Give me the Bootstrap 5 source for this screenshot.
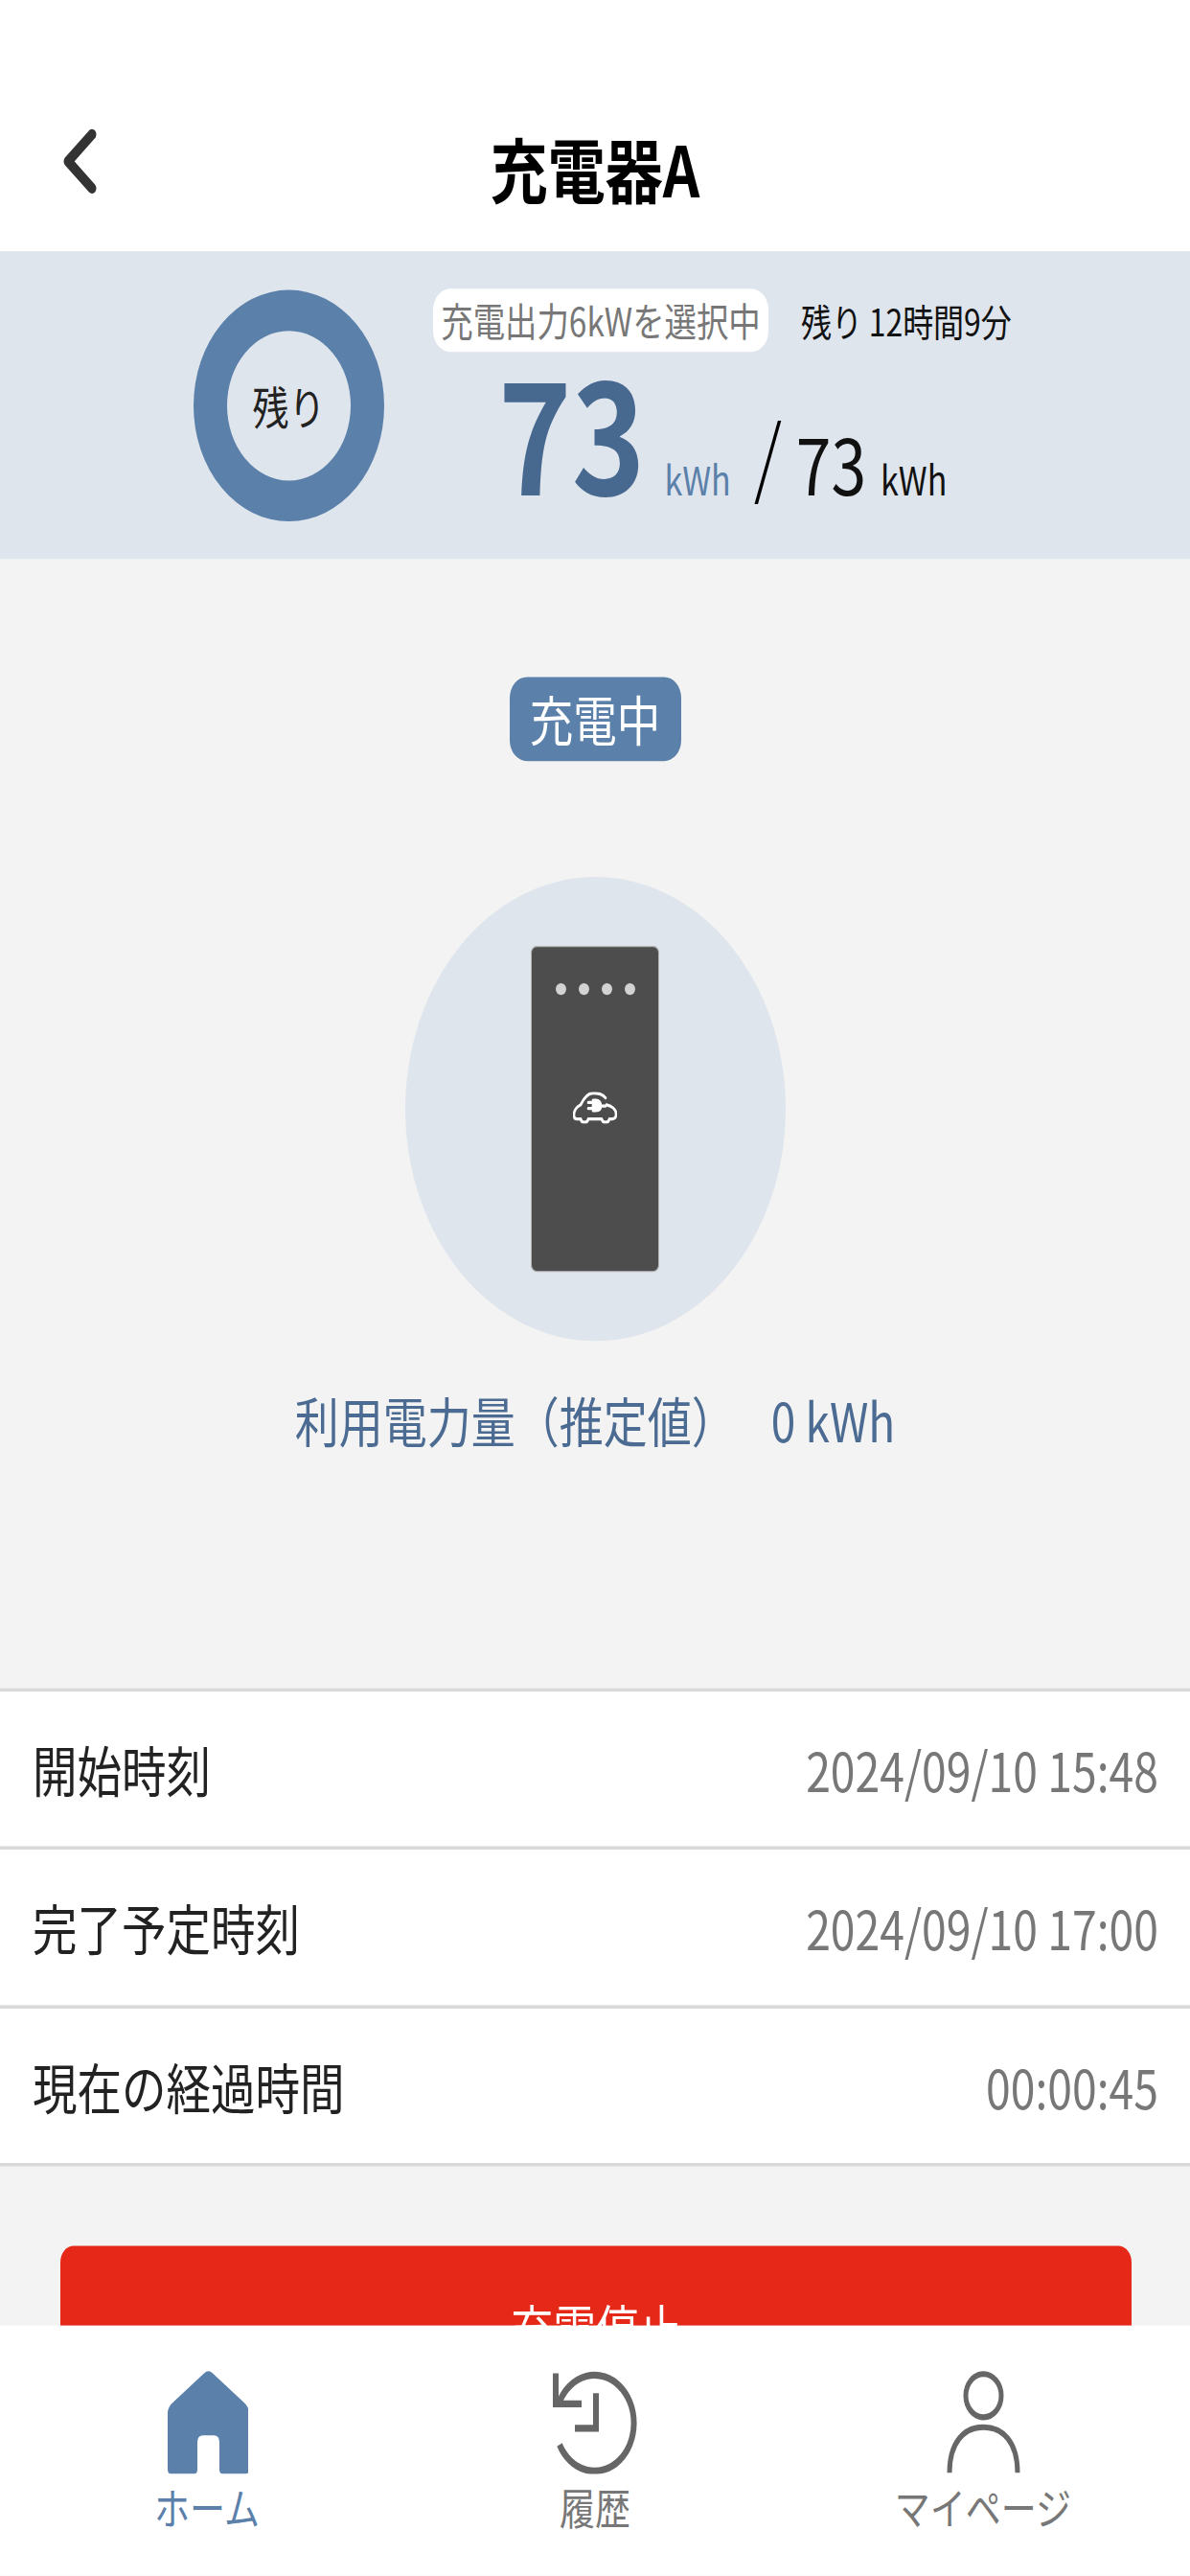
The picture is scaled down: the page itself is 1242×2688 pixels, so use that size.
<!DOCTYPE html>
<html lang="ja">
<head>
    <meta charset="UTF-8">
    <meta name="viewport" content="width=device-width, initial-scale=1.0">
    <title>充電器A</title>
    <link href="https://cdn.jsdelivr.net/npm/bootstrap@5.3.0/dist/css/bootstrap.min.css" rel="stylesheet">
    <style>
        html, body {
            margin: 0;
            height: 2688px;
            overflow: hidden;
            background: #fff;
        }
        /* the screenshot is stretched vertically, so the whole screen is scaled */
        .phone {
            width: 1242px;
            height: 2203.3px;
            transform: scaleY(1.22);
            transform-origin: top left;
            position: relative;
            overflow: hidden;
            background: #f3f3f3;
            font-family: "Noto Sans CJK JP", "Noto Sans", sans-serif;
            line-height: 1;
            color: #222;
        }
        .top-head {
            height: 215px;
            padding: 70px 0 0 65px;
            background: #fff;
            display: grid;
            grid-template-columns: 1fr auto 1fr;
            align-items: center;
        }
        .top-head h1 {
            font-size: 60px;
            font-weight: 700;
            color: #000;
            margin: 0 65px 0 0;
        }
        .back-icon {
            width: 36px;
            height: 56px;
            margin-bottom: 9px;
        }
        .info-band {
            height: 263px;
            background: #dfe5ed;
            padding-left: 202px;
            gap: 51px;
        }
        .ring {
            width: 199px;
            height: 198px;
            border: 35px solid #5b80aa;
            border-radius: 50%;
            font-size: 38px;
            flex: none;
        }
        .info-right {
            padding-top: 32px;
            align-self: flex-start;
        }
        .power-chip {
            width: 350px;
            height: 54px;
            background: #fff;
            border-radius: 18px;
            color: #777;
            font-size: 33.4px;
        }
        .left-time {
            font-size: 32px;
            color: #111;
            margin-left: 34px;
            letter-spacing: -.1px;
        }
        .value-row {
            margin-top: 12px;
            padding-left: 70px;
        }
        .big-num {
            font-size: 130px;
            font-weight: 700;
            color: #47688f;
            line-height: 108px;
            margin-left: -2px;
        }
        .unit {
            font-size: 34px;
        }
        .unit-blue {
            color: #5b80aa;
            margin-left: 20px;
        }
        .slash {
            font-size: 74px;
            font-weight: 300;
            color: #000;
            margin-left: 24px;
            transform: translateY(-6px);
        }
        .total-num {
            font-size: 66px;
            color: #111;
            margin-left: 15px;
        }
        .unit-dark {
            color: #111;
            margin-left: 15px;
        }
        .charge-area {
            height: 966px;
            padding-top: 101px;
        }
        .status-tag {
            width: 179px;
            height: 72px;
            background: #5b80aa;
            color: #fff;
            border-radius: 18px;
            font-size: 45.5px;
        }
        .charger-bg {
            width: 397px;
            height: 397px;
            margin-top: 99px;
            border-radius: 50%;
            background: #dfe5ed;
        }
        .charger {
            width: 134px;
            height: 279px;
            background: #4d4d4d;
            border: 1px solid #b5b5b5;
            border-radius: 6px;
            padding-top: 31px;
        }
        .led-row {
            gap: 13px;
        }
        .led {
            width: 11px;
            height: 10px;
            border-radius: 50%;
            background: #d2d2d2;
        }
        .car-icon {
            width: 46px;
            height: 27px;
            margin-top: 83px;
        }
        .usage-text {
            margin-top: 44px;
            font-size: 46px;
            color: #4b6b92;
        }
        .usage-value {
            margin-left: 37px;
        }
        .time-list {
            border-top: 3px solid #d9d9d9;
            border-radius: 0;
        }
        .time-list .list-group-item {
            height: 135.4px;
            padding: 0 33px 0 34px;
            border: 0;
            border-bottom: 3px solid #d9d9d9;
            font-size: 46.5px;
            color: #222;
            background: #fff;
        }
        .time-val {
            color: #777;
            font-size: 46.3px;
        }
        .stop-btn {
            display: block;
            width: 1118px;
            height: 138px;
            margin: 68px 0 0 63px;
            background: #e62818;
            border: 0;
            border-radius: 14px;
            color: #fff;
            font-size: 44.5px;
        }
        .bottom-tabs {
            position: absolute;
            left: 0;
            right: 0;
            bottom: 0;
            height: 214px;
            background: #fff;
            padding: 38px 13.5px 0;
        }
        .tab-icon {
            height: 89px;
            display: block;
            margin: 0 auto;
        }
        .tab-label {
            font-size: 37px;
            color: #777;
            margin-top: 10px;
        }
        .tab-label.active {
            color: #5b80aa;
        }
    </style>
</head>
<body>
    <div class="phone">
        <div class="top-head">
            <svg class="back-icon" viewBox="0 0 36 56" fill="none" stroke="#333" stroke-width="9" stroke-linecap="round" stroke-linejoin="round">
                <path d="M31 5 L6 28 L31 51"/>
            </svg>
            <h1>充電器A</h1>
            <span></span>
        </div>

        <div class="info-band d-flex align-items-center">
            <div class="ring d-flex align-items-center justify-content-center">残り</div>
            <div class="info-right">
                <div class="d-flex align-items-center">
                    <div class="power-chip d-flex align-items-center justify-content-center">充電出力6kWを選択中</div>
                    <div class="left-time">残り 12時間9分</div>
                </div>
                <div class="value-row d-flex align-items-baseline">
                    <span class="big-num">73</span>
                    <span class="unit unit-blue">kWh</span>
                    <span class="slash">/</span>
                    <span class="total-num">73</span>
                    <span class="unit unit-dark">kWh</span>
                </div>
            </div>
        </div>

        <div class="charge-area d-flex flex-column align-items-center">
            <div class="status-tag d-flex align-items-center justify-content-center">充電中</div>
            <div class="charger-bg d-flex align-items-center justify-content-center">
                <div class="charger d-flex flex-column align-items-center">
                    <div class="led-row d-flex">
                        <span class="led"></span><span class="led"></span><span class="led"></span><span class="led"></span>
                    </div>
                    <svg class="car-icon" viewBox="0 0 46 27" fill="none" stroke="#fff" stroke-width="2.600" stroke-linecap="round" stroke-linejoin="round">
                        <path d="M34 5 C30 1 25 1 21 1 C15 1 11 6 8 11 C3 13 1 16 1 20 C1 22 2 23 4 23 H8"/>
                        <path d="M8 23 C9 27 15 27 16 23 H30 C31 27 37 27 38 23 H41 C44 23 45 21 45 19 C45 15 41 12 35 11"/>
                        <path d="M21 7 H24 C27 7 29 9 29 12 C29 15 27 16 24 16 H21 Z" fill="#fff"/>
                        <path d="M16 9 H21 M16 14 H21 M29 12 H34"/>
                    </svg>
                </div>
            </div>
            <div class="usage-text">利用電力量&#xFF08;推定値&#xFF09;<span class="usage-value">0 kWh</span></div>
        </div>

        <div class="list-group time-list">
            <div class="list-group-item d-flex justify-content-between align-items-center">
                <span>開始時刻</span><span class="time-val">2024/09/10 15:48</span>
            </div>
            <div class="list-group-item d-flex justify-content-between align-items-center">
                <span>完了予定時刻</span><span class="time-val">2024/09/10 17:00</span>
            </div>
            <div class="list-group-item d-flex justify-content-between align-items-center">
                <span>現在の経過時間</span><span class="time-val">00:00:45</span>
            </div>
        </div>

        <button class="btn stop-btn" type="button">充電停止</button>

        <div class="bottom-tabs row g-0">
            <div class="col-4 text-center">
                <svg class="tab-icon" viewBox="-1 0 85 89" width="85" fill="#5b80aa">
                    <path d="M38 3 Q42.500 -1 47 3 L81 29 Q85 33 85 37 V85 Q85 89 81 89 H58 Q54 89 54 85 V62 Q54 56 48 56 H37 Q31 56 31 62 V85 Q31 89 27 89 H4 Q0 89 0 85 V37 Q0 33 4 29 Z"/>
                </svg>
                <div class="tab-label active">ホーム</div>
            </div>
            <div class="col-4 text-center">
                <svg class="tab-icon" viewBox="0 0 88 89" width="88" fill="none" stroke="#666" stroke-width="6">
                    <path d="M7 27 A41 41 0 1 1 7 64"/>
                    <path d="M3 3 V29 H30"/>
                    <path d="M45 20 V50 H23"/>
                </svg>
                <div class="tab-label">履歴</div>
            </div>
            <div class="col-4 text-center">
                <svg class="tab-icon" viewBox="0 0 77 89" width="77" fill="none" stroke="#666" stroke-width="5">
                    <circle cx="38.500" cy="22" r="18.500"/>
                    <path d="M3 88 C3 62 18 49 38.500 49 C59 49 74 62 74 88"/>
                </svg>
                <div class="tab-label">マイページ</div>
            </div>
        </div>
    </div>
    <script src="https://cdn.jsdelivr.net/npm/bootstrap@5.3.0/dist/js/bootstrap.bundle.min.js"></script>
</body>
</html>
